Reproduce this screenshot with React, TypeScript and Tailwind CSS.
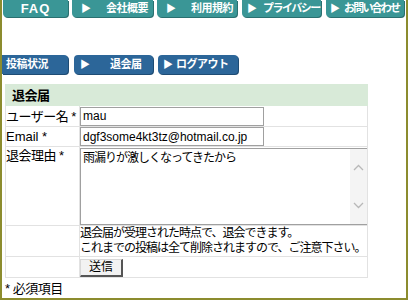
import React from 'react'

const font = { fontFamily: '"Liberation Sans", "Noto Sans CJK JP", sans-serif' }

function App(): React.ReactElement {
    return (
        <div
            className="w-[408px] h-[300px] bg-white border-l-2 border-r-2 border-b-2 border-[#8c8c2e] overflow-hidden text-black"
            style={font}
        >
            {/* top nav */}
            <div className="flex h-[17px] text-white text-[11px] font-bold whitespace-nowrap">
                <div className="ml-px w-[65px] bg-[#3a9696] rounded-b-sm flex items-center justify-center text-[13px] tracking-[1px] shadow-[1px_1px_0_#2a7070]">FAQ</div>
                <div className="ml-[4px] w-[81px] bg-[#3a9696] rounded-b-sm flex items-center shadow-[1px_1px_0_#2a7070]">
                    <span className="ml-[9px] text-[10px]">▶</span><span className="ml-[15px] tracking-[-0.5px]">会社概要</span>
                </div>
                <div className="ml-[4px] w-[80px] bg-[#3a9696] rounded-b-sm flex items-center shadow-[1px_1px_0_#2a7070]">
                    <span className="ml-[9px] text-[10px]">▶</span><span className="ml-[15px] tracking-[-0.5px]">利用規約</span>
                </div>
                <div className="ml-[5px] w-[79px] bg-[#3a9696] rounded-b-sm flex items-center shadow-[1px_1px_0_#2a7070]">
                    <span className="ml-[5px] text-[10px]">▶</span><span className="ml-[6px] tracking-[-1.5px]">プライバシー</span>
                </div>
                <div className="ml-[5px] w-[78px] bg-[#3a9696] rounded-b-sm flex items-center shadow-[1px_1px_0_#2a7070]">
                    <span className="ml-[4px] text-[10px]">▶</span><span className="ml-[4px] tracking-[-1.8px]">お問い合わせ</span>
                </div>
            </div>

            {/* member nav */}
            <div className="flex h-[19px] mt-[38px] text-white text-[11px] font-bold whitespace-nowrap">
                <div className="w-[66px] bg-[#2c6699] rounded-r-sm flex items-center shadow-[1px_1px_0_#1e4c74]">
                    <span className="ml-[4px] tracking-[-0.5px]">投稿状況</span>
                </div>
                <div className="ml-[6px] w-[79px] bg-[#2c6699] rounded-sm flex items-center shadow-[1px_1px_0_#1e4c74]">
                    <span className="ml-[6px] text-[10px]">▶</span><span className="ml-[20px] tracking-[-0.5px]">退会届</span>
                </div>
                <div className="ml-[5px] w-[80px] bg-[#2c6699] rounded-sm flex items-center shadow-[1px_1px_0_#1e4c74]">
                    <span className="ml-[5px] text-[10px]">▶</span><span className="ml-[3px] tracking-[-0.5px]">ログアウト</span>
                </div>
            </div>

            {/* form */}
            <table className="ml-[3px] mt-[10px] w-[363px] border-collapse table-fixed text-[13px]">
                <colgroup>
                    <col className="w-[74px]" />
                    <col />
                </colgroup>
                <tbody>
                    <tr className="h-[21px] bg-[#d8ead8]">
                        <td colSpan={2} className="border border-[#d8ead8] pl-[6px] font-bold leading-none tracking-[-0.5px]">退会届</td>
                    </tr>
                    <tr className="h-[21px]">
                        <td className="border border-[#e2e2e2] p-0 whitespace-nowrap tracking-[-0.5px] leading-none">ユーザー名 *</td>
                        <td className="border border-[#e2e2e2] p-0">
                            <div className="w-[184px] h-[19px] border border-[#a0a0a0] flex items-center pl-[2px] leading-none text-[12px]">mau</div>
                        </td>
                    </tr>
                    <tr className="h-[20px]">
                        <td className="border border-[#e2e2e2] p-0 leading-none">Email *</td>
                        <td className="border border-[#e2e2e2] p-0">
                            <div className="w-[184px] h-[19px] border border-[#a0a0a0] flex items-center pl-[2px] leading-none text-[12px] whitespace-nowrap overflow-hidden">dgf3some4kt3tz@hotmail.co.jp</div>
                        </td>
                    </tr>
                    <tr className="h-[79px]">
                        <td className="border border-[#e2e2e2] p-0 align-top pt-[2px] leading-none tracking-[-0.5px]">退会理由 *</td>
                        <td className="border border-[#e2e2e2] p-0 pt-px">
                            <div className="w-[288px] h-[77px] border border-[#a0a0a0] flex">
                                <div className="flex-1 pl-[2px] pt-[2px] text-[12px] leading-tight tracking-[-1px]">雨漏りが激しくなってきたから</div>
                                <div className="w-[17px] bg-[#f4f4f4] flex flex-col items-center justify-around text-[#b8b8b8]">
                                    <svg width="11" height="7" viewBox="0 0 11 7" fill="none" stroke="currentColor" strokeWidth="1.3"><path d="M1 6L5.5 1.5L10 6" /></svg>
                                    <svg width="11" height="7" viewBox="0 0 11 7" fill="none" stroke="currentColor" strokeWidth="1.3"><path d="M1 1L5.5 5.5L10 1" /></svg>
                                </div>
                            </div>
                        </td>
                    </tr>
                    <tr className="h-[30px]">
                        <td className="border border-[#e2e2e2] p-0"></td>
                        <td className="border border-[#e2e2e2] p-0 text-[12px] leading-[15px] tracking-[-1px] whitespace-nowrap">
                            退会届が受理された時点で、退会できます。<br />
                            これまでの投稿は全て削除されますので、ご注意下さい。
                        </td>
                    </tr>
                    <tr className="h-[20px]">
                        <td className="border border-[#e2e2e2] p-0"></td>
                        <td className="border border-[#e2e2e2] p-0">
                            <button className="w-[43px] h-[18px] bg-[#f2f2f2] border border-[#d8d8d8] border-r-[#555] border-b-[#555] border-r-2 border-b-2 text-[12px] leading-none">送信</button>
                        </td>
                    </tr>
                </tbody>
            </table>

            <div className="ml-[3px] mt-[4px] text-[13px] leading-none tracking-[-0.5px]">* 必須項目</div>
        </div>
    )
}

export default App
